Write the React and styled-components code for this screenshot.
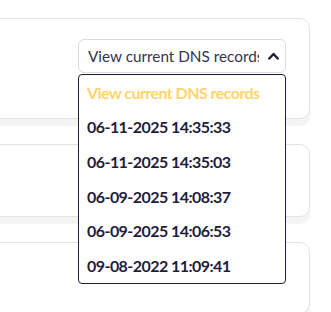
import React from "react";
import styled, { createGlobalStyle } from "styled-components";

const GlobalStyle = createGlobalStyle`
  html, body {
    margin: 0;
    padding: 0;
    background: #ffffff;
    font-family: "Lato", "Noto Sans", sans-serif;
  }
`;

const records = [
  "06-11-2025 14:35:33",
  "06-11-2025 14:35:03",
  "06-09-2025 14:08:37",
  "06-09-2025 14:06:53",
  "09-08-2022 11:09:41",
];

function App() {
  return (
    <>
      <GlobalStyle />
      <Page>
        <Card height="101px">
          <Toolbar>
            <Picker>
              <PickerButton>
                <PickerLabel>View current DNS records</PickerLabel>
                <Chevron width="11" height="8" viewBox="0 0 11 8">
                  <polyline
                    points="1.3,6.5 5.5,2 9.7,6.5"
                    fill="none"
                    stroke="#1f1d3d"
                    strokeWidth="2.4"
                    strokeLinecap="round"
                    strokeLinejoin="round"
                  />
                </Chevron>
              </PickerButton>
              <Menu>
                <MenuItem active>View current DNS records</MenuItem>
                {records.map((r) => (
                  <MenuItem key={r}>{r}</MenuItem>
                ))}
              </Menu>
            </Picker>
          </Toolbar>
        </Card>
        <Card height="73px" />
        <Card height="72px" />
      </Page>
    </>
  );
}

export default App;

const Page = styled.div`
  display: flex;
  flex-direction: column;
  gap: 25px;
  padding-top: 18px;
  margin-left: -30px;
  width: 340px;
`;

const Card = styled.div`
  position: relative;
  box-sizing: border-box;
  height: ${(props) => props.height};
  border: 1px solid #e3e3e6;
  border-radius: 10px;
  background: #ffffff;
  box-shadow: 0 7px 0 #f4f4f5;
`;

const Toolbar = styled.div`
  display: flex;
  justify-content: flex-end;
  padding: 20px 23px 0 0;
`;

const Picker = styled.div`
  position: relative;
  width: 208px;
  z-index: 5;
`;

const PickerButton = styled.div`
  box-sizing: border-box;
  height: 34px;
  display: flex;
  align-items: center;
  padding: 0 6px 0 9px;
  border: 1px solid #dcdce0;
  border-radius: 6px;
  background: #ffffff;
`;

const PickerLabel = styled.span`
  flex: 1;
  overflow: hidden;
  white-space: nowrap;
  font-size: 15.3px;
  color: #35344f;
  margin-right: 9px;
`;

const Chevron = styled.svg`
  flex: none;
  margin-top: -1px;
`;

const Menu = styled.div`
  position: absolute;
  top: calc(100% + 1px);
  left: 0;
  right: 0;
  box-sizing: border-box;
  border: 1px solid #1f1d3d;
  border-radius: 4px;
  background: #ffffff;
  display: flex;
  flex-direction: column;
`;

const MenuItem = styled.div`
  height: 34.6px;
  display: flex;
  align-items: center;
  padding-left: 8px;
  font-size: 16px;
  font-weight: 700;
  letter-spacing: -0.55px;
  white-space: nowrap;
  color: ${(props) => (props.active ? "#ffd56b" : "#1f1d3d")};
`;
